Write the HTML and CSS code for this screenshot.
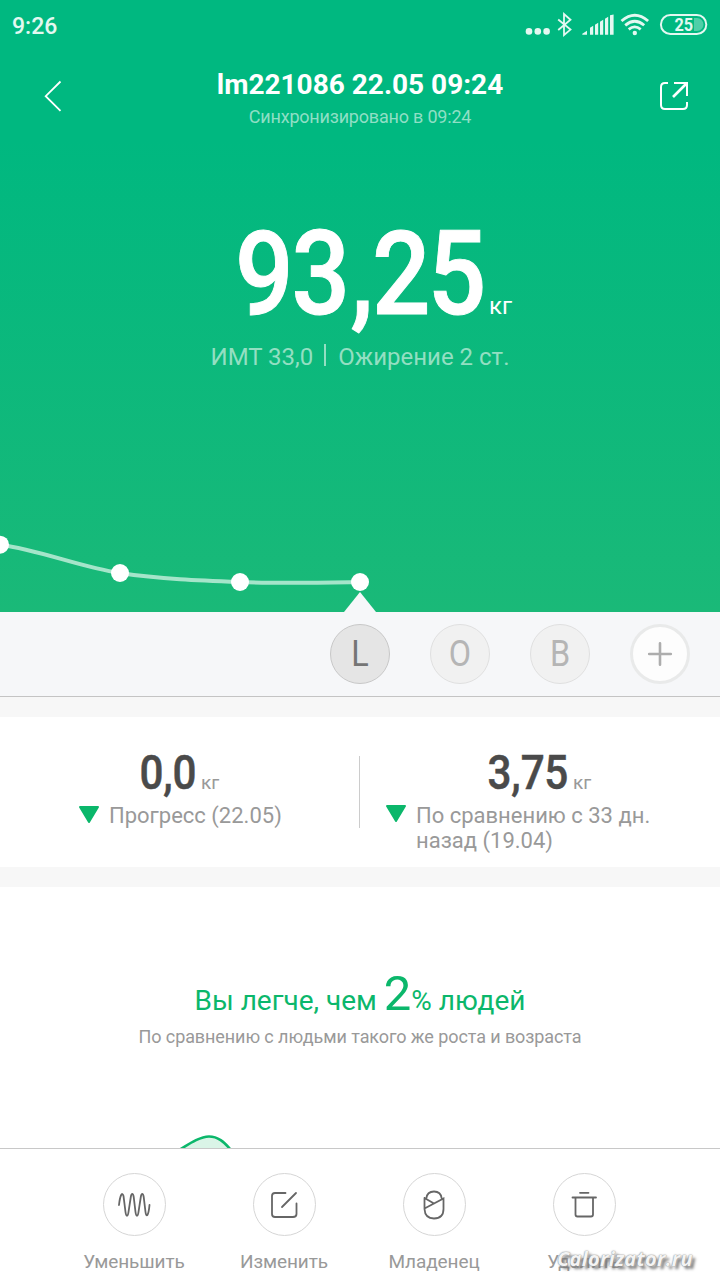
FILE: index.html
```html
<!DOCTYPE html>
<html lang="ru">

<head>
    <meta charset="UTF-8">
    <title>Вес</title>

    <link rel="stylesheet" href="styles.css">
</head>


<body>
    <div class="screen">
        <div class="hero">
            <div class="status">
                <span class="clock">9:26</span>
                <svg class="status-icons" width="184" height="28" viewBox="0 0 184 28">
                    <g fill="#e3f8f1">
                        <circle cx="5" cy="19.4" r="3.3"/>
                        <circle cx="13.8" cy="19.4" r="3.3"/>
                        <circle cx="22.6" cy="19.4" r="3.3"/>
                        <path d="M58.3 22.7v-1l4.7-3v4zM66 22.7v-7l3.2-2v9zM71 22.7v-10l3.2-2v12zM76 22.7v-13l3.2-2v15zM81 22.7v-16l3.2-2v18zM86 22.7v-19.5l3.6-0.8v20.3z"/>
                        <circle cx="110.8" cy="21" r="2.2"/>
                    </g>
                    <g fill="none" stroke="#e3f8f1">
                        <path d="M34.2 7.5L46.5 17.6L40 23V2L46.5 7.8L34.2 18" stroke-width="1.8"/>
                        <path d="M97.5 9q13.3-11.5 26.6 0M101.2 13.3q9.6-8 19 0M104.7 17.3q6-4.800 12 0" stroke-width="2.8"/>
                        <rect x="136.9" y="3" width="45.4" height="19" rx="9.5" stroke-width="2"/>
                    </g>
                    <path d="M170 6h3a6.5 6.5 0 0 1 0 13h-3z" fill="#4fcfa8"/>
                    <text class="battery" transform="scale(.88 1)" x="171" y="19">25</text>
                </svg>
            </div>

            <div class="header">
                <svg width="30" height="40" viewBox="0 0 30 40" fill="none" stroke="#fff" stroke-width="1.8">
                    <path d="M18.5 6.500L3.7 21.200L18.5 35.800"/>
                </svg>
                <div class="heading">
                    <div class="title">lm221086 22.05 09:24</div>
                    <div class="sync">Синхронизировано в 09:24</div>
                </div>
                <svg width="30" height="40" viewBox="0 0 30 40" fill="none" stroke="#fff" stroke-width="2">
                    <path d="M8 8H5Q1 8 1 12V30Q1 34 5 34H23Q27 34 27 30V27"/>
                    <path d="M14 8H27V21"/>
                    <path d="M27 8L13 22" stroke-width="2.6"/>
                </svg>
            </div>

            <div class="weight">
                <svg width="252" height="112" viewBox="0 0 252 112">
                    <text class="weight-num" transform="scale(.88 1)" x="-1 63 130 154.500 218" y="98">93,25</text>
                </svg>
                <span class="weight-unit">кг</span>
            </div>

            <div class="bmi">
                <span>ИМТ 33,0</span>
                <i class="bmi-line"></i>
                <span>Ожирение 2 ст.</span>
            </div>

            <svg class="history" width="720" height="92" viewBox="0 0 720 92">
                <path d="M0 24.7C40 30 80 47 120 53C160 59 200 60.5 240 62C280 63.4 320 62.6 360 62" fill="none" stroke="#a5e5ca" stroke-width="4"/>
                <g fill="#fff">
                    <circle cx="0" cy="24.7" r="9"/>
                    <circle cx="120" cy="53" r="9"/>
                    <circle cx="240" cy="62" r="9"/>
                    <circle cx="360" cy="62" r="9"/>
                </g>
                <path d="M360 72L376 92H344z" fill="#f6f7f9"/>
            </svg>
        </div>

        <div class="users">
            <div class="user user-active"><span>L</span></div>
            <div class="user"><span>O</span></div>
            <div class="user"><span>B</span></div>
            <div class="user user-add">
                <svg width="26" height="26" viewBox="0 0 26 26" stroke="#adadad" stroke-width="2.6" stroke-linecap="round">
                    <path d="M2.2 13H23.8M13 2.2V23.8"/>
                </svg>
            </div>
        </div>

        <div class="stats">
            <div class="stat">
                <div class="stat-value">
                    <svg width="60" height="44" viewBox="0 0 60 44">
                        <text class="stat-num" transform="scale(.88 1)" x="0.5 27.500 38" y="38">0,0</text>
                    </svg>
                    <span>кг</span>
                </div>
                <div class="stat-label">
                    <svg width="22" height="18" viewBox="0 0 22 18"><path d="M2 1H20L11 16z" fill="#0bb76b" stroke="#0bb76b" stroke-width="2" stroke-linejoin="round"/></svg>
                    <p>Прогресс (22.05)</p>
                </div>
            </div>
            <div class="stat stat-month">
                <div class="stat-value">
                    <svg width="84" height="44" viewBox="0 0 84 44">
                        <text class="stat-num" transform="scale(.88 1)" x="0.5 27.500 38.5 65" y="38">3,75</text>
                    </svg>
                    <span>кг</span>
                </div>
                <div class="stat-label">
                    <svg width="22" height="18" viewBox="0 0 22 18"><path d="M2 1H20L11 16z" fill="#0bb76b" stroke="#0bb76b" stroke-width="2" stroke-linejoin="round"/></svg>
                    <p>По сравнению с 33 дн.<br>назад (19.04)</p>
                </div>
            </div>
        </div>

        <div class="compare">
            <div class="compare-title">Вы легче, чем <b>2</b>% людей</div>
            <div class="compare-text">По сравнению с людьми такого же роста и возраста</div>
            <svg class="compare-chart" width="720" height="14" viewBox="0 0 720 14">
                <path d="M180 15.5C192 8 201 2.5 209 2.5C218 2.5 224 8 230.5 15.5" fill="#daf4e7" stroke="#0bb76b" stroke-width="2.6"/>
            </svg>
        </div>

        <div class="actions">
            <div class="action">
                <div class="action-icon">
                    <svg width="34" height="34" viewBox="0 0 34 34">
                        <path d="M2 17C3 8 5 3 6.5 8L8.5 24C9.2 29 10.8 29 11.5 24L13.8 9C14.5 5 16 5 16.7 9L18.5 24C19.2 29 20.8 29 21.5 24L23.8 9C24.5 5 26 5 26.7 9L28.5 24C29.3 30 31.5 28 32.5 17"/>
                    </svg>
                </div>
                <span>Уменьшить</span>
            </div>
            <div class="action">
                <div class="action-icon">
                    <svg width="34" height="34" viewBox="0 0 34 34">
                        <path d="M18.5 5H8Q5 5 5 8V26Q5 29 8 29H26Q29.5 29 29.5 26V15.5M29 5L15 19"/>
                    </svg>
                </div>
                <span>Изменить</span>
            </div>
            <div class="action">
                <div class="action-icon">
                    <svg width="34" height="34" viewBox="0 0 34 34">
                        <path d="M9.3 10.5C9.8 6 13 3.5 17 3.500S24.200 6 24.700 10.500M7.500 10V21Q8 30.500 17 30.500Q26.500 30.500 26.500 21V10.500L7.500 20.500M7.500 10L17 15.500"/>
                    </svg>
                </div>
                <span>Младенец</span>
            </div>
            <div class="action">
                <div class="action-icon">
                    <svg width="34" height="34" viewBox="0 0 34 34">
                        <path d="M13 4.8H21.5M5.5 9.5H29M8.5 9.5V26.5Q8.5 28.5 10.5 28.5H24Q26 28.5 26 26.5V9.5"/>
                    </svg>
                </div>
                <span>Удалить</span>
            </div>
            <div class="watermark">Calorizator.ru</div>
        </div>
    </div>
</body>

</html>
```
FILE: styles.css
```css
* {
    margin: 0;
    padding: 0;
    box-sizing: border-box;
}

body {
    font-family: Roboto, "Noto Sans", sans-serif;
    background-color: #fff;
}

svg {
    display: block;
    flex-shrink: 0;
    overflow: visible;
}

.screen {
    width: 720px;
    height: 1280px;
    display: flex;
    flex-direction: column;
    overflow: hidden;
}

.hero {
    height: 612px;
    display: flex;
    flex-direction: column;
    color: #fff;
    background: linear-gradient(#00b880 0, #00b880 140px, #1ab978 612px);
}

/* 状态栏 */
.status {
    height: 50px;
    padding: 12px 12px 0 12px;
    display: flex;
    justify-content: space-between;
}

.clock {
    font-size: 23px;
    line-height: 29px;
    font-weight: 500;
    color: #e3f8f1;
}

.battery {
    font-size: 18.5px;
    font-weight: 700;
    fill: #e3f8f1;
}

.header {
    height: 90px;
    padding: 0 30px 0 42px;
    display: flex;
    justify-content: space-between;
    align-items: center;
}

.heading {
    text-align: center;
    padding: 9px 12px 0 0;
}

.title {
    font-size: 28px;
    line-height: 34px;
    font-weight: 700;
}

.sync {
    font-size: 18px;
    line-height: 30px;
    letter-spacing: -0.2px;
    color: #8fdfc5;
}

.weight {
    height: 112px;
    margin-top: 76px;
    padding-left: 236px;
    display: flex;
    align-items: flex-start;
}

.weight-num {
    font-size: 117px;
    font-weight: 500;
    fill: #fff;
    stroke: #fff;
    stroke-width: 1px;
}

.weight-unit {
    margin: 76px 0 0 1px;
    font-size: 24px;
    line-height: 28px;
}

.bmi {
    margin-top: 12px;
    height: 34px;
    display: flex;
    justify-content: center;
    align-items: center;
    font-size: 24px;
    color: #93dfc2;
}

.bmi-line {
    width: 2px;
    height: 22px;
    margin: 0 12px 4px 11px;
    background-color: #93dfc2;
}

.history {
    margin-top: auto;
    overflow: hidden;
}

/* 用户列表 */
.users {
    height: 85px;
    padding: 12px 0 0 330px;
    display: flex;
    gap: 40px;
    background-color: #f6f7f9;
    border-bottom: 1px solid #c4c4c4;
}

.user {
    width: 60px;
    height: 60px;
    border: 1px solid #e0e0e0;
    border-radius: 50%;
    background-color: #f1f1f1;
    color: #b5b5b5;
    font-size: 36px;
    line-height: 58px;
    text-align: center;
}

.user span {
    display: block;
    transform: scaleX(.9);
}

.user-active {
    border-color: #c8c8c8;
    background-color: #e5e5e5;
    color: #757575;
}

.user-add {
    display: flex;
    justify-content: center;
    align-items: center;
    border: 3px solid #e9eaea;
    background-color: #fdfdfd;
}

.stats {
    height: 190px;
    display: flex;
    border-top: 20px solid #f7f7f7;
    border-bottom: 20px solid #f7f7f7;
}

.stat {
    width: 360px;
    padding-top: 34px;
}

.stat:first-child {
    background: linear-gradient(#ccc, #ccc) no-repeat 359px 39px / 1px 72px;
}

.stat-value {
    padding-left: 139px;
    display: flex;
}

.stat-num {
    font-size: 48px;
    font-weight: 500;
    fill: #4a4a4a;
    stroke: #4a4a4a;
    stroke-width: 0.5px;
}

.stat-value span {
    margin: 20px 0 0 2px;
    font-size: 19px;
    line-height: 24px;
    color: #999;
}

.stat-label {
    padding-left: 78px;
    margin-top: 9px;
    display: flex;
    gap: 9px;
}

.stat-label svg {
    margin-top: 2px;
}

.stat-label p {
    font-size: 22px;
    line-height: 25px;
    margin-top: -1px;
    color: #999;
}

.stat-month .stat-value {
    padding-left: 127px;
}

.stat-month .stat-label {
    padding-left: 25px;
}

.stat-month .stat-label svg {
    margin-top: 1px;
}

.compare {
    height: 261px;
    padding-top: 82px;
    display: flex;
    flex-direction: column;
    text-align: center;
}

.compare-title {
    height: 56px;
    font-size: 28px;
    line-height: 60px;
    color: #0bb76b;
}

.compare-title b {
    font-size: 49px;
    font-weight: 400;
    line-height: 1;
}

.compare-text {
    font-size: 18px;
    line-height: 24px;
    letter-spacing: -0.09px;
    color: #999;
}

.compare-chart {
    margin-top: auto;
    overflow: hidden;
}

/* 底部按钮 */
.actions {
    height: 132px;
    padding: 24px 60px 0 59px;
    border-top: 1px solid #c8c8c8;
    display: flex;
    position: relative;
}

.action {
    width: 150px;
    text-align: center;
}

.action-icon {
    width: 63px;
    height: 63px;
    margin: 0 auto;
    display: flex;
    justify-content: center;
    align-items: center;
    border: 1px solid #d6d6d6;
    border-radius: 50%;
}

.action-icon path {
    fill: none;
    stroke: #666;
    stroke-width: 1.8;
    stroke-linecap: round;
}

.action span {
    display: block;
    margin-top: 14px;
    font-size: 19px;
    line-height: 24px;
    letter-spacing: -0.1px;
    color: #999;
}

.watermark {
    position: absolute;
    left: 557px;
    top: 98px;
    font-family: "Open Sans", sans-serif;
    font-size: 20px;
    line-height: 24px;
    font-weight: 700;
    font-style: italic;
    letter-spacing: 0.3px;
    color: #f4f4f4;
    text-shadow: 0 0 1px #888, 0 0 2px #999, 3px 3px 3px #777;
}
```
